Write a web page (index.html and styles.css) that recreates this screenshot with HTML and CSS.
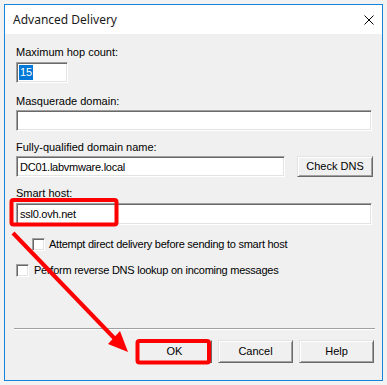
FILE: index.html
```html
<!DOCTYPE html>
<html>
<head>
<meta charset="utf-8">
<link rel="stylesheet" href="styles.css">
</head>
<body>
<div class="window">
  <div class="titlebar">
    <span class="title">Advanced Delivery</span>
    <svg class="close" width="10" height="10" viewBox="0 0 10 10"><path d="M0.5 0.5 L9.5 9.5 M9.5 0.5 L0.5 9.5" stroke="#000" stroke-width="1" fill="none"/></svg>
  </div>
  <div class="content">
    <div class="label l1">Maximum hop count:</div>
    <div class="field hop"><span class="sel">15</span></div>
    <div class="label l2">Masquerade domain:</div>
    <div class="field full f2"></div>
    <div class="label l3">Fully-qualified domain name:</div>
    <div class="row fqdn">
      <div class="field fq">DC01.labvmware.local</div>
      <div class="btn check">Check DNS</div>
    </div>
    <div class="label l3">Smart host:</div>
    <div class="field full f4">ssl0.ovh.net</div>
    <div class="cbrow cb1"><span class="cb"></span><span class="cbtext">Attempt direct delivery before sending to smart host</span></div>
    <div class="cbrow cb2"><span class="cb"></span><span class="cbtext">Perform reverse DNS lookup on incoming messages</span></div>
    <div class="sep"></div>
    <div class="buttons">
      <div class="btn">OK</div>
      <div class="btn">Cancel</div>
      <div class="btn">Help</div>
    </div>
  </div>
</div>
<svg class="annot" width="387" height="385" viewBox="0 0 387 385">
  <rect x="11.5" y="200" width="105" height="24.5" rx="2" fill="none" stroke="#f00" stroke-width="4"/>
  <rect x="137.5" y="341" width="71.5" height="21.5" rx="2" fill="none" stroke="#f00" stroke-width="4"/>
  <line x1="13" y1="233" x2="117" y2="341" stroke="#f00" stroke-width="4"/>
  <polygon points="128,352 108,344 120,331" fill="#f00"/>
</svg>
</body>
</html>
```
FILE: styles.css
```css
html, body {
  margin: 0;
  padding: 0;
}
body {
  background: #f2f2f2;
  width: 387px;
  height: 385px;
  overflow: hidden;
  position: relative;
  font-family: "Liberation Sans", Arial, sans-serif;
  font-size: 11px;
  color: #000;
}
.window {
  box-sizing: border-box;
  margin: 4px 0 0 4px;
  width: 379px;
  height: 377px;
  border: 1px solid #1883d7;
  background: #f0f0f0;
}
.titlebar {
  height: 29px;
  background: #fff;
  display: flex;
  align-items: center;
  justify-content: space-between;
  padding: 0 8px 0 8px;
}
.title {
  font-family: "Noto Sans", "Open Sans", sans-serif;
  font-size: 12px;
  line-height: 16px;
  margin-top: 1px;
  color: #1a1a1a;
}
.close {
  display: block;
}
.content {
  padding: 0 9px 0 11px;
  line-height: 13px;
}
.label.l1 { margin-top: 12px; }
.label.l2 { margin-top: 12px; }
.label.l3 { margin-top: 10px; }
.field {
  box-sizing: border-box;
  height: 21px;
  background: #fff;
  border-top: 1px solid #a0a0a0;
  border-left: 1px solid #a0a0a0;
  border-right: 1px solid #fff;
  border-bottom: 1px solid #fff;
  box-shadow: inset 1px 1px #696969, inset -1px -1px #e3e3e3;
  padding: 4px 0 0 3px;
  line-height: 13px;
  white-space: nowrap;
  letter-spacing: -0.25px;
}
.hop {
  width: 52px;
  margin-top: 3px;
  padding-top: 2px;
  padding-left: 2px;
  letter-spacing: 0;
}
.sel {
  display: inline-block;
  background: #0078d7;
  color: #fff;
  line-height: 15px;
  padding: 0 1px;
}
.full { width: 356px; }
.f2 { margin-top: 2px; }
.f4 { margin-top: 3px; height: 22px; }
.row {
  display: flex;
  gap: 12px;
  margin-top: 2px;
}
.fq { width: 269px; }
.btn {
  box-sizing: border-box;
  width: 75px;
  height: 23px;
  display: flex;
  align-items: center;
  justify-content: center;
  background: #f0f0f0;
  border-top: 1px solid #e3e3e3;
  border-left: 1px solid #e3e3e3;
  border-right: 1px solid #696969;
  border-bottom: 1px solid #696969;
  box-shadow: inset 1px 1px #fff, inset -1px -1px #a0a0a0;
}
.check {
  width: 76px;
  height: 21px;
}
.cbrow {
  display: flex;
  align-items: center;
  height: 13px;
}
.cbtext { letter-spacing: -0.25px; }
.cb1 { margin-top: 13px; padding-left: 16px; gap: 4px; }
.cb2 { margin-top: 13px; gap: 5px; }
.cb {
  box-sizing: border-box;
  width: 13px;
  height: 13px;
  background: #fff;
  border-top: 1px solid #a0a0a0;
  border-left: 1px solid #a0a0a0;
  border-right: 1px solid #fff;
  border-bottom: 1px solid #fff;
  box-shadow: inset 1px 1px #696969, inset -1px -1px #e3e3e3;
  flex: none;
}
.sep {
  margin: 51px -2px 0 -2px;
  height: 1px;
  background: #a0a0a0;
  border-bottom: 1px solid #fff;
}
.buttons {
  display: flex;
  justify-content: flex-end;
  gap: 6px;
  margin-top: 10px;
  margin-right: -1px;
}
.annot {
  position: absolute;
  left: 0;
  top: 0;
  pointer-events: none;
}
```
